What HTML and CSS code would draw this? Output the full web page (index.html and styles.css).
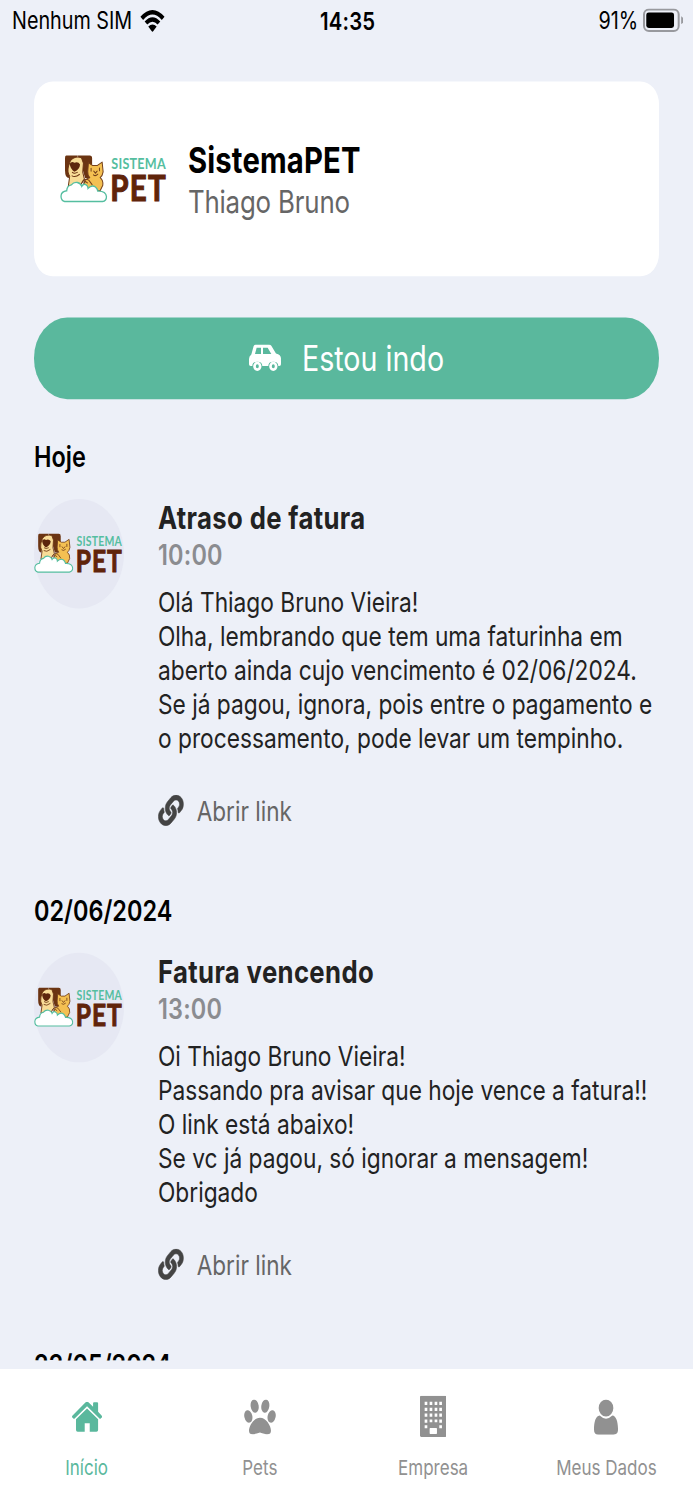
FILE: index.html
```html
<!DOCTYPE html>
<html lang="pt-BR">
<head>
    <meta charset="UTF-8">
    <meta name="viewport" content="width=device-width, initial-scale=1.0">
    <title>SistemaPET</title>
    <link rel="stylesheet" href="styles.css">
</head>
<body>

    <!-- Shared shapes -->
    <svg class="sprite">
        <symbol id="pets" viewBox="31 48 142 140" preserveAspectRatio="none">
            <path d="M50 51h34l-4 12-10-1-10 10-2 44q-12 0-12-22V58q0-7 4-7z" fill="#6b3412"/>
            <path d="M84 51h36q7 0 7 8v45q0 10-9 12h-12L96 82z" fill="#6b3412"/>
            <path d="M62 66q12-15 33-9l6 16-2 26 5 20-14 20H56l4-28q-8-12-4-28z" fill="#f8dc97" stroke="#6b3412" stroke-width="3"/>
            <path d="M60 75q6-9 14-3 11-5 17 5-1 14-17 21-12-7-14-23z" fill="#5d260d"/>
            <path d="M67 99q7 6 17 0M66 109q10 7 24-4" fill="none" stroke="#6b3412" stroke-width="3"/>
            <path d="M116 72l13 8h13l15-10 3 28q-2 12-9 17 10 8 8 22l-8 16h-50l3-29q8-8 16-9-7-8-6-18z" fill="#f4c052" stroke="#74401b" stroke-width="3" stroke-linejoin="round"/>
            <path d="M124 88v8M149 87v8M132 96l5 6 5-6M131 107q6 5 13-2M97 128q7-13 20-6l10 13M102 131l5-5 6 4" fill="none" stroke="#74401b" stroke-width="3" stroke-linecap="round"/>
            <path d="M45 184q-11-2-11-16 1-13 17-15 1-15 14-17 7-9 18-7 10 2 13 11 5-8 12-5 7 3 7 11 11-11 22-4 6 5 7 12 24-1 26 16 0 12-12 14z" fill="#fff" stroke="#55bea0" stroke-width="4"/>
        </symbol>
        <symbol id="link" viewBox="-8 -8 528 528">
            <path stroke-width="10" d="M326.600 185.400c59.700 59.800 58.900 155.700.360 214.600-.110.120-.240.250-.360.370l-67.200 67.200c-59.300 59.300-155.700 59.300-215 0-59.300-59.300-59.300-155.700 0-215l37.100-37.100c9.800-9.800 26.800-3.300 27.300 10.600.6 17.700 3.800 35.500 9.700 52.700 2 5.800.6 12.300-3.800 16.600l-13.100 13.100c-28 28-28.900 73.700-1.200 102 28 28.600 74.100 28.700 102.300.5l67.200-67.200c28.200-28.200 28.100-73.800 0-101.800-3.700-3.700-7.400-6.600-10.300-8.600a16 16 0 0 1-6.900-12.600c-.4-10.600 3.300-21.500 11.700-29.800l21.100-21.100c5.500-5.500 14.200-6.200 20.600-1.700a152.500 152.500 0 0 1 20.500 17.200zM467.500 44.400c-59.300-59.300-155.700-59.300-215 0l-67.200 67.200c-.12.12-.25.25-.36.370-58.600 58.900-59.400 154.800.36 214.600a152.500 152.500 0 0 0 20.500 17.200c6.400 4.500 15.100 3.800 20.600-1.700l21.100-21.100c8.400-8.400 12.100-19.200 11.700-29.800a16 16 0 0 0-6.900-12.600c-2.900-2-6.600-4.900-10.300-8.600-28.100-28.100-28.200-73.600 0-101.800l67.200-67.200c28.200-28.200 74.300-28.100 102.300.5 27.800 28.300 26.900 73.900-1.200 102l-13.100 13.100c-4.400 4.400-5.800 10.800-3.800 16.600 5.900 17.200 9 35 9.700 52.700.5 13.900 17.500 20.400 27.300 10.600l37.100-37.100c59.300-59.300 59.300-155.700 0-215z"/>
        </symbol>
    </svg>

    <div class="phone">
        <div class="status">
            <div class="carrier">
                <span>Nenhum SIM</span>
                <svg class="wifi" viewBox="0 0 28 22" preserveAspectRatio="none">
                    <path d="M2 8.500Q14-3.500 26 8.500M6.700 13Q14 6 21.300 13" fill="none" stroke="#000" stroke-width="4.300"/>
                    <path d="M9.300 16.500q4.700-4.200 9.400 0L14 22z"/>
                </svg>
            </div>
            <div class="clock">14:35</div>
            <div class="power">
                <span>91%</span>
                <svg class="battery" viewBox="0 0 41 24" preserveAspectRatio="none">
                    <rect x="1" y="1" width="35" height="22" rx="5" fill="none" stroke="#98999e" stroke-width="2"/>
                    <rect x="3.300" y="4" width="28" height="16" rx="2.500"/>
                    <path d="M38.500 8q2.500 1.500 2.500 4t-2.500 4z" fill="#98999e"/>
                </svg>
            </div>
        </div>

        <div class="content">
            <div class="card">
                <div class="logo">
                    <svg><use href="#pets"/></svg>
                    <div class="logo-name">
                        <div class="logo-top">SISTEMA</div>
                        <div class="logo-bottom">PET</div>
                    </div>
                </div>
                <div class="card-text">
                    <div class="company">SistemaPET</div>
                    <div class="user">Thiago Bruno</div>
                </div>
            </div>

            <div class="going">
                <svg class="car" viewBox="0 0 96 81" preserveAspectRatio="none">
                    <path fill-rule="evenodd" d="M20 0h39q5 0 8 4l14 23q15 3 15 15v18q0 5-5 5h-3q0-13-15-13T58 65H40q0-13-15-13T10 65H5q-5 0-5-5V44q0-9 7-14L14 5q2-5 6-5zm3 10l-5 19h18V10zm19 0v19h25L56 10z"/>
                    <ellipse cx="25" cy="66" rx="8.500" ry="10" fill="none" stroke="#fff" stroke-width="8"/>
                    <ellipse cx="73" cy="66" rx="8.500" ry="10" fill="none" stroke="#fff" stroke-width="8"/>
                </svg>
                <span>Estou indo</span>
            </div>

            <div class="day">Hoje</div>
            <div class="message">
                <div class="avatar">
                    <div class="logo">
                        <svg><use href="#pets"/></svg>
                        <div class="logo-name">
                            <div class="logo-top">SISTEMA</div>
                            <div class="logo-bottom">PET</div>
                        </div>
                    </div>
                </div>
                <div class="body">
                    <div class="title">Atraso de fatura</div>
                    <div class="time">10:00</div>
                    <div class="text">Olá Thiago Bruno Vieira!<br>
                        Olha, lembrando que tem uma faturinha em<br>
                        aberto ainda cujo vencimento é 02/06/2024.<br>
                        Se já pagou, ignora, pois entre o pagamento e<br>
                        o processamento, pode levar um tempinho.</div>
                    <div class="open"><svg><use href="#link"/></svg><span>Abrir link</span></div>
                </div>
            </div>

            <div class="day date">02/06/2024</div>
            <div class="message">
                <div class="avatar">
                    <div class="logo">
                        <svg><use href="#pets"/></svg>
                        <div class="logo-name">
                            <div class="logo-top">SISTEMA</div>
                            <div class="logo-bottom">PET</div>
                        </div>
                    </div>
                </div>
                <div class="body">
                    <div class="title">Fatura vencendo</div>
                    <div class="time">13:00</div>
                    <div class="text">Oi Thiago Bruno Vieira!<br>
                        Passando pra avisar que hoje vence a fatura!!<br>
                        O link está abaixo!<br>
                        Se vc já pagou, só ignorar a mensagem!<br>
                        Obrigado</div>
                    <div class="open"><svg><use href="#link"/></svg><span>Abrir link</span></div>
                </div>
            </div>

            <div class="day date">23/05/2024</div>
        </div>

        <div class="tabs">
            <div class="tab active">
                <svg class="home" viewBox="0 0 90 90" preserveAspectRatio="none">
                    <path d="M45 0q3 0 5 2l13 13V4q0-3 3-3h9q3 0 3 3v26l11 12q2 3 0 5l-3 3q-2 2-4 0L45 13 8 50q-2 2-4 0l-3-3q-2-2 0-5L40 2q2-2 5-2z"/>
                    <path d="M45 20l33 32v33q0 5-5 5H53V64H38v26H17q-5 0-5-5V52z"/>
                </svg>
                <span>Início</span>
            </div>
            <div class="tab">
                <svg class="paw" viewBox="0 0 96 106" preserveAspectRatio="none">
                    <ellipse cx="32" cy="20" rx="12" ry="20" transform="rotate(-8 32 20)"/>
                    <ellipse cx="64" cy="20" rx="12" ry="20" transform="rotate(8 64 20)"/>
                    <ellipse cx="13" cy="51" rx="12" ry="19" transform="rotate(-12 13 51)"/>
                    <ellipse cx="83" cy="51" rx="12" ry="19" transform="rotate(12 83 51)"/>
                    <path d="M48 55c18 0 33 24 33 39 0 14-13 12-33 5-20 7-33 9-33-5 0-15 15-39 33-39z"/>
                </svg>
                <span>Pets</span>
            </div>
            <div class="tab">
                <svg class="building" viewBox="0 0 80 124" preserveAspectRatio="none">
                    <rect width="80" height="124" rx="4"/>
                    <path d="M18 18v80M33 18v62M48 18v62M62 18v80" fill="none" stroke="#fff" stroke-width="8" stroke-dasharray="10 7.700"/>
                    <rect x="29" y="97" width="22" height="18" rx="2" fill="#fff"/>
                </svg>
                <span>Empresa</span>
            </div>
            <div class="tab">
                <svg class="person" viewBox="0 0 72 107" preserveAspectRatio="none">
                    <ellipse cx="36" cy="26" rx="22" ry="26"/>
                    <path d="M17 49q19 19 38 0c12 1 17 20 17 43q0 15-14 15H14Q0 107 0 92c0-23 5-42 17-43z"/>
                </svg>
                <span>Meus Dados</span>
            </div>
        </div>
    </div>

</body>
</html>
```
FILE: styles.css
```css
body {
    margin: 0;
    width: 693px;
    height: 1500px;
    overflow: hidden;
    background-color: #edf0f8;
    font-family: Inter, "Liberation Sans", sans-serif;
}

/* 375x667 layout stretched over the whole window */
.phone {
    display: flex;
    flex-direction: column;
    width: 375px;
    height: 667px;
    zoom: 1.848;
    transform: scaleY(1.2169);
    transform-origin: 0 0;
    color: #000;
}
.sprite {
    display: block;
    width: 0;
    height: 0;
}

/* Logo, sized in em so the card and the avatars can share it */
.logo {
    display: flex;
    width: 5.850em;
    height: 2.150em;
    font-family: Lato, sans-serif;
    white-space: nowrap;
}
.logo svg {
    flex: none;
    width: 2.570em;
    height: 2.150em;
    margin-right: 0.140em;
}
.logo-top {
    font-size: 0.680em;
    line-height: 1em;
    margin: 0.120em 0 0 0.080em;
    font-weight: bold;
    letter-spacing: 0.020em;
    color: #55bea0;
}
.logo-bottom {
    font-size: 1.600em;
    line-height: 0.900em;
    font-weight: bold;
    letter-spacing: 0.040em;
    color: #60240a;
    -webkit-text-stroke: 0.030em #60240a;
}

/* Status bar */
.status {
    display: grid;
    grid-template-columns: 1fr auto 1fr;
    height: 19.4px;
    line-height: 19.4px;
    padding: 0 5.200px 0 6.500px;
    font-size: 10.700px;
}
.carrier, .power {
    display: flex;
    align-items: center;
}
.power { justify-content: flex-end; }
.wifi {
    width: 13.500px;
    height: 10px;
    margin: 0 0 1px 4.200px;
}
.clock {
    font-size: 11px;
    font-weight: 600;
    letter-spacing: 0.1px;
}
.battery {
    width: 22px;
    height: 10.400px;
    margin: 0 0 1px 2.500px;
}

/* Scrolling content */
.content {
    box-sizing: border-box;
    height: 585.8px;
    padding: 16.800px 18.400px 0;
    overflow: hidden;
}
.card {
    display: flex;
    align-items: center;
    height: 86.800px;
    border-radius: 10px;
    background-color: #fff;
}
.card .logo {
    font-size: 10px;
    margin-left: 14.200px;
}
.card-text {
    margin: 1.600px 0 0 10.600px;
}
.company {
    font-size: 15.800px;
    line-height: 19px;
    font-weight: 700;
    letter-spacing: 0.1px;
}
.user {
    font-size: 14px;
    line-height: 18.400px;
    letter-spacing: -0.1px;
    color: #666;
}
.going {
    display: flex;
    align-items: center;
    justify-content: center;
    height: 36px;
    margin-top: 18.400px;
    border-radius: 18px;
    background-color: #5ab89d;
    color: #fff;
    font-size: 15.500px;
}
.car {
    width: 17.300px;
    height: 12px;
    margin-right: 11.400px;
    fill: #fff;
}
.day {
    margin-top: 17.700px;
    font-size: 12.700px;
    line-height: 16px;
    font-weight: 600;
}
.date { margin-top: 29.500px; }
.message {
    display: flex;
    margin-top: 10.700px;
}
.avatar {
    display: flex;
    align-items: center;
    flex: none;
    width: 48.700px;
    height: 48.700px;
    margin-right: 18.400px;
    border-radius: 50%;
    background-color: #e6e8f3;
}
.avatar .logo { font-size: 8.330px; }
.body {
    color: #222;
    white-space: nowrap;
}
.title {
    font-size: 13.900px;
    line-height: 17.600px;
    font-weight: 700;
    letter-spacing: 0.2px;
}
.time {
    font-size: 12.700px;
    line-height: 15px;
    font-weight: 600;
    letter-spacing: 0.1px;
    color: #8b8c90;
}
.text {
    margin-top: 6px;
    font-size: 12.300px;
    line-height: 15.160px;
}
.open {
    display: flex;
    align-items: center;
    height: 14px;
    margin-top: 17.300px;
    font-size: 12.200px;
    color: #666;
}
.open svg {
    width: 14px;
    height: 14px;
    margin-right: 7px;
    fill: #444;
    stroke: #444;
}

/* Bottom tabs */
.tabs {
    display: grid;
    grid-template-columns: repeat(4, 1fr);
    flex: 1;
    margin-top: 3.500px;
    background-color: #fff;
    color: #919191;
    fill: #919191;
}
.tab {
    display: flex;
    flex-direction: column;
    align-items: center;
    padding-top: 4.700px;
    font-size: 9.200px;
}
.tab svg { margin: auto; }
.tab span {
    line-height: 12px;
    margin-bottom: 8.300px;
}
.active {
    color: #5ab89d;
    fill: #5ab89d;
}
.home { width: 16.300px; height: 13.300px; }
.paw { width: 17.300px; height: 15.700px; }
.building { width: 14.400px; height: 18.300px; }
.person { width: 13px; height: 15.700px; }
```
